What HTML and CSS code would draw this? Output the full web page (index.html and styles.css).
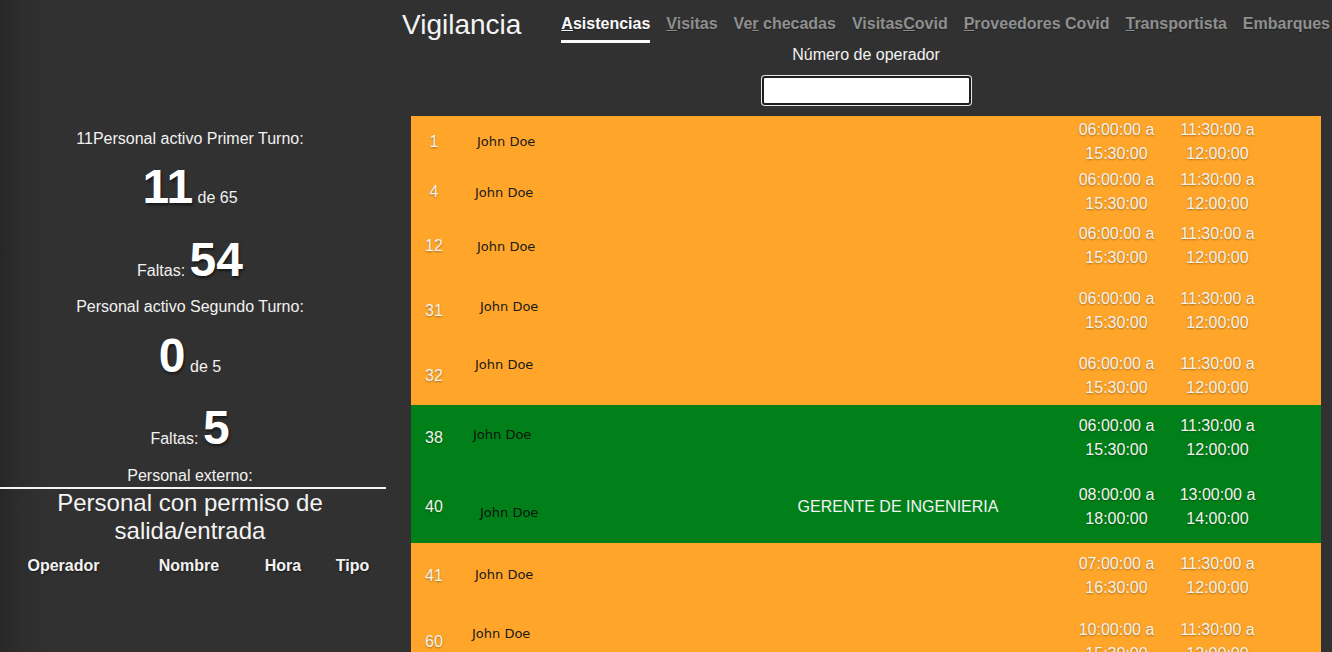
FILE: index.html
```html
<!DOCTYPE html>
<html lang="es">
<head>
<meta charset="utf-8">
<title>Vigilancia</title>
<link rel="stylesheet" href="styles.css">
</head>
<body>
<div class="page">
  <aside class="side">
    <div class="label first">11Personal activo Primer Turno:</div>
    <div class="big m10"><b class="num">11</b> de 65</div>
    <div class="big m17">Faltas: <b class="num">54</b></div>
    <div class="label m9">Personal activo Segundo Turno:</div>
    <div class="big m11"><b class="num">0</b> de 5</div>
    <div class="big m16">Faltas: <b class="num">5</b></div>
    <div class="label m10">Personal externo:</div>
    <div class="rule"></div>
    <h2 class="perm">Personal con permiso de salida/entrada</h2>
    <div class="perm-head">
      <span>Operador</span><span>Nombre</span><span>Hora</span><span>Tipo</span>
    </div>
  </aside>
  <main class="main">
    <header class="top">
      <h1 class="title">Vigilancia</h1>
      <nav class="nav">
        <a class="tab active"><u>A</u>sistencias</a>
        <a class="tab"><u>V</u>isitas</a>
        <a class="tab">Ve<u>r</u> checadas</a>
        <a class="tab">Visitas<u>C</u>ovid</a>
        <a class="tab"><u>P</u>roveedores Covid</a>
        <a class="tab"><u>T</u>ransportista</a>
        <a class="tab">Embarques</a>
      </nav>
    </header>
    <div class="search">
      <label class="search-label">Número de operador</label>
      <input class="search-input" type="text">
    </div>
    <div class="list">
      <div class="row orange h51"><span class="id">1</span><span class="name in2">John Doe</span><span class="pos"></span><span class="time">06:00:00 a 15:30:00</span><span class="time">11:30:00 a 12:00:00</span></div>
      <div class="row orange h50"><span class="id">4</span><span class="name">John Doe</span><span class="pos"></span><span class="time">06:00:00 a 15:30:00</span><span class="time">11:30:00 a 12:00:00</span></div>
      <div class="row orange h58"><span class="id">12</span><span class="name in2">John Doe</span><span class="pos"></span><span class="time">06:00:00 a 15:30:00</span><span class="time">11:30:00 a 12:00:00</span></div>
      <div class="row orange h72"><span class="id">31</span><span class="name up5 in5">John Doe</span><span class="pos"></span><span class="time">06:00:00 a 15:30:00</span><span class="time">11:30:00 a 12:00:00</span></div>
      <div class="row orange h58"><span class="id">32</span><span class="name up12">John Doe</span><span class="pos"></span><span class="time">06:00:00 a 15:30:00</span><span class="time">11:30:00 a 12:00:00</span></div>
      <div class="row green h66"><span class="id">38</span><span class="name up4 out2">John Doe</span><span class="pos"></span><span class="time">06:00:00 a 15:30:00</span><span class="time">11:30:00 a 12:00:00</span></div>
      <div class="row green h72"><span class="id">40</span><span class="name down5 in5">John Doe</span><span class="pos">GERENTE DE INGENIERIA</span><span class="time">08:00:00 a 18:00:00</span><span class="time">13:00:00 a 14:00:00</span></div>
      <div class="row orange h66"><span class="id">41</span><span class="name up2">John Doe</span><span class="pos"></span><span class="time">07:00:00 a 16:30:00</span><span class="time">11:30:00 a 12:00:00</span></div>
      <div class="row orange h66"><span class="id">60</span><span class="name up9 out3">John Doe</span><span class="pos"></span><span class="time">10:00:00 a 15:30:00</span><span class="time">11:30:00 a 12:00:00</span></div>
    </div>
  </main>
</div>
</body>
</html>
```

FILE: styles.css
```css
html, body {
  margin: 0;
  padding: 0;
  height: 100%;
  overflow: hidden;
}
body {
  background: linear-gradient(to right, #272727 0, #2d2d2d 20px, #313131 50px, #313131 100%);
  color: #f2f2f2;
  font-family: "Liberation Sans", Arial, sans-serif;
  font-size: 16px;
}
.page {
  display: flex;
  align-items: flex-start;
  width: 1332px;
}

/* side panel */
.side {
  width: 380px;
  flex: 0 0 380px;
  padding-right: 6px;
  padding-top: 129px;
  display: flex;
  flex-direction: column;
  align-items: stretch;
  text-align: center;
}
.label {
  line-height: 20px;
  height: 20px;
}
.big {
  line-height: 56px;
  height: 56px;
  white-space: nowrap;
}
.num {
  font-size: 48px;
  font-weight: bold;
  color: #fff;
  text-shadow: 1px 2px 3px rgba(0, 0, 0, 0.55);
  vertical-align: baseline;
}
.m9 { margin-top: 9px; }
.m10 { margin-top: 10px; }
.m11 { margin-top: 11px; }
.m16 { margin-top: 16px; }
.m17 { margin-top: 17px; }
.rule {
  height: 2px;
  background: #f4f4f4;
  margin-top: 1px;
  width: 386px;
}
.perm {
  margin: 0;
  font-size: 24px;
  font-weight: normal;
  line-height: 28px;
  padding: 0 40px;
  color: #f4f4f4;
}
.perm-head {
  margin-top: 11px;
  display: grid;
  grid-template-columns: 127px 124px 64px 75px;
  font-weight: bold;
  line-height: 20px;
  text-shadow: 1px 1px 2px rgba(0, 0, 0, 0.5);
}

/* main */
.main {
  flex: 1 1 auto;
  display: flex;
  flex-direction: column;
  align-items: stretch;
}
.top {
  display: flex;
  align-items: flex-start;
  padding-left: 16px;
  height: 44px;
  white-space: nowrap;
}
.title {
  margin: 0;
  padding-top: 1px;
  font-size: 28px;
  font-weight: normal;
  line-height: 48px;
  color: #f4f4f4;
  margin-right: 40px;
}
.nav {
  display: flex;
  gap: 16px;
}
.tab {
  display: block;
  padding-top: 15px;
  line-height: 18px;
  padding-bottom: 7px;
  font-weight: bold;
  color: #8f8f8f;
  border-bottom: 3px solid transparent;
  text-shadow: 0 1px 1px rgba(0, 0, 0, 0.3);
}
.tab.active {
  color: #fafafa;
  border-bottom-color: #fafafa;
}
.search {
  margin-left: 25px;
  width: 910px;
  display: flex;
  flex-direction: column;
  align-items: center;
}
.search-label {
  margin-top: 1px;
  line-height: 20px;
  color: #f2f2f2;
}
.search-input {
  box-sizing: border-box;
  margin-top: 11px;
  width: 209px;
  height: 29px;
  border: 2px solid #1e1e1e;
  border-radius: 3px;
  box-shadow: 0 0 0 1px #e8e8e8;
  background: #fff;
  padding: 0;
}

.list {
  margin-top: 11px;
  margin-left: 25px;
  width: 910px;
  display: flex;
  flex-direction: column;
}
.row {
  display: grid;
  grid-template-columns: 46px 273px 336px 101px 101px 53px;
  align-items: center;
}
.orange { background: #ffa62a; }
.green { background: #01801a; }
.h50 { height: 50px; }
.h51 { height: 51px; }
.h58 { height: 58px; }
.h66 { height: 66px; }
.h72 { height: 72px; }
.id {
  text-align: center;
  color: #f7f2ea;
  font-size: 16px;
  text-shadow: 0 1px 2px rgba(0, 0, 0, 0.35);
}
.name {
  padding-left: 18px;
  font-family: "DejaVu Sans", Verdana, sans-serif;
  font-size: 13px;
  color: #1a1a1a;
}
.green .name { color: #0b160b; }
.up2 { margin-bottom: 4px; }
.up4 { margin-bottom: 8px; }
.up5 { margin-bottom: 10px; }
.up9 { margin-bottom: 18px; }
.up12 { margin-bottom: 24px; }
.down5 { margin-top: 10px; }
.in2 { padding-left: 20px; }
.in5 { padding-left: 23px; }
.out2 { padding-left: 16px; }
.out3 { padding-left: 15px; }
.pos {
  text-align: center;
  color: #f4f4f4;
}
.time {
  text-align: center;
  line-height: 24px;
  color: #f6f3ee;
  text-shadow: 0 1px 2px rgba(0, 0, 0, 0.35);
}
```
